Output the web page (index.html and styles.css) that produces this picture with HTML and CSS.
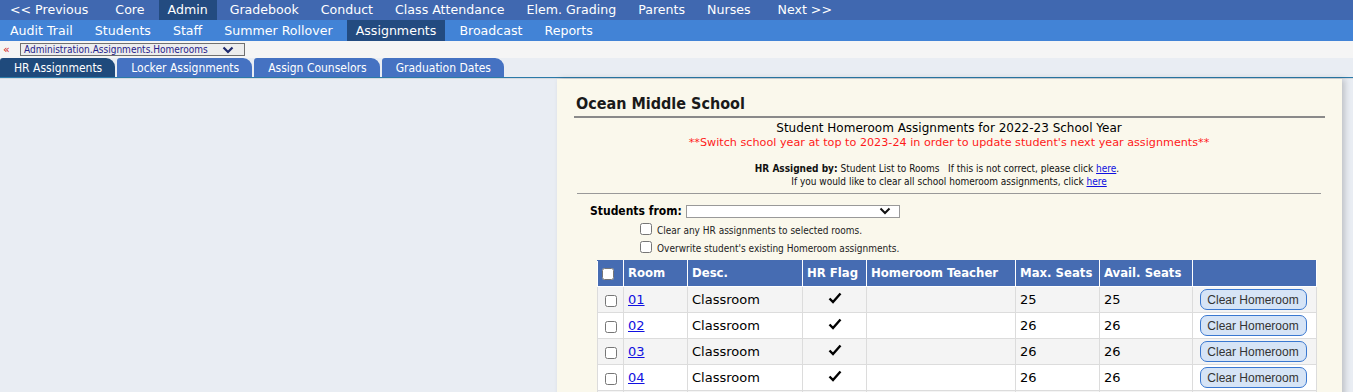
FILE: index.html
```html
<!DOCTYPE html>
<html lang="en">
<head>
  <meta charset="UTF-8" />
  <title>Homeroom Assignments</title>
  <link rel="stylesheet" href="styles.css">
</head>
<body>

  <!-- Main menu -->
  <div class="menu top">
    <a class="prev">&lt;&lt; Previous</a>
    <a>Core</a>
    <a class="on">Admin</a>
    <a>Gradebook</a>
    <a>Conduct</a>
    <a>Class Attendance</a>
    <a>Elem. Grading</a>
    <a>Parents</a>
    <a>Nurses</a>
    <a class="next">Next &gt;&gt;</a>
  </div>
  <div class="menu sub">
    <a>Audit Trail</a>
    <a>Students</a>
    <a>Staff</a>
    <a>Summer Rollover</a>
    <a class="on">Assignments</a>
    <a>Broadcast</a>
    <a>Reports</a>
  </div>

  <!-- Breadcrumb -->
  <div class="crumb">
    <span class="back">&laquo;</span>
    <div class="crumb-select">
      <span>Administration.Assignments.Homerooms</span>
      <svg width="12" height="8" viewBox="0 0 12 8"><path d="M1.5 1.5 L6 6 L10.5 1.5" fill="none" stroke="#1e2a6e" stroke-width="2.2"/></svg>
    </div>
  </div>

  <!-- Tabs -->
  <div class="tabs">
    <div class="tab on">HR Assignments</div>
    <div class="tab">Locker Assignments</div>
    <div class="tab">Assign Counselors</div>
    <div class="tab">Graduation Dates</div>
  </div>

  <div class="content">
    <div class="panel">
      <h2 class="school">Ocean Middle School</h2>

      <div class="intro">
        <div class="title">Student Homeroom Assignments for 2022-23 School Year</div>
        <div class="warn">**Switch school year at top to 2023-24 in order to update student's next year assignments**</div>
        <div class="note">
          <div class="note-first"><b>HR Assigned by:</b> Student List to Rooms &nbsp; If this is not correct, please click <a href="#">here</a>.</div>
          <div>If you would like to clear all school homeroom assignments, click <a href="#">here</a></div>
        </div>
      </div>

      <div class="options">
        <div class="from">
          <label>Students from:</label>
          <div class="from-select">
            <svg width="12" height="8" viewBox="0 0 12 8"><path d="M1.5 1.5 L6 6 L10.5 1.5" fill="none" stroke="#111" stroke-width="2"/></svg>
          </div>
        </div>
        <label class="opt"><input type="checkbox"> Clear any HR assignments to selected rooms.</label>
        <label class="opt"><input type="checkbox"> Overwrite student's existing Homeroom assignments.</label>
      </div>

      <table class="rooms">
        <thead>
          <tr>
            <th class="c-chk"><input type="checkbox"></th>
            <th class="c-room">Room</th>
            <th class="c-desc">Desc.</th>
            <th class="c-flag">HR Flag</th>
            <th class="c-teacher">Homeroom Teacher</th>
            <th class="c-max">Max. Seats</th>
            <th class="c-avail">Avail. Seats</th>
            <th class="c-btn"></th>
          </tr>
        </thead>
        <tbody>
          <tr>
            <td class="c-chk"><input type="checkbox"></td>
            <td><a href="#">01</a></td>
            <td>Classroom</td>
            <td class="c-flag"><svg class="tick" width="14" height="12" viewBox="0 0 14 12"><path d="M1.5 6.5 L5 10 L12.5 1.5" fill="none" stroke="#000" stroke-width="2.4"/></svg></td>
            <td></td>
            <td>25</td>
            <td>25</td>
            <td class="c-btn"><button>Clear Homeroom</button></td>
          </tr>
          <tr>
            <td class="c-chk"><input type="checkbox"></td>
            <td><a href="#">02</a></td>
            <td>Classroom</td>
            <td class="c-flag"><svg class="tick" width="14" height="12" viewBox="0 0 14 12"><path d="M1.5 6.5 L5 10 L12.5 1.5" fill="none" stroke="#000" stroke-width="2.4"/></svg></td>
            <td></td>
            <td>26</td>
            <td>26</td>
            <td class="c-btn"><button>Clear Homeroom</button></td>
          </tr>
          <tr>
            <td class="c-chk"><input type="checkbox"></td>
            <td><a href="#">03</a></td>
            <td>Classroom</td>
            <td class="c-flag"><svg class="tick" width="14" height="12" viewBox="0 0 14 12"><path d="M1.5 6.5 L5 10 L12.5 1.5" fill="none" stroke="#000" stroke-width="2.4"/></svg></td>
            <td></td>
            <td>26</td>
            <td>26</td>
            <td class="c-btn"><button>Clear Homeroom</button></td>
          </tr>
          <tr>
            <td class="c-chk"><input type="checkbox"></td>
            <td><a href="#">04</a></td>
            <td>Classroom</td>
            <td class="c-flag"><svg class="tick" width="14" height="12" viewBox="0 0 14 12"><path d="M1.5 6.5 L5 10 L12.5 1.5" fill="none" stroke="#000" stroke-width="2.4"/></svg></td>
            <td></td>
            <td>26</td>
            <td>26</td>
            <td class="c-btn"><button>Clear Homeroom</button></td>
          </tr>
          <tr>
            <td class="c-chk"><input type="checkbox"></td>
            <td><a href="#">05</a></td>
            <td>Classroom</td>
            <td class="c-flag"><svg class="tick" width="14" height="12" viewBox="0 0 14 12"><path d="M1.5 6.5 L5 10 L12.5 1.5" fill="none" stroke="#000" stroke-width="2.4"/></svg></td>
            <td></td>
            <td>26</td>
            <td>26</td>
            <td class="c-btn"><button>Clear Homeroom</button></td>
          </tr>
        </tbody>
      </table>
    </div>
  </div>

</body>
</html>
```

FILE: styles.css
```css
body {
  margin: 0;
  font-family: "DejaVu Sans", Verdana, sans-serif;
  background: #e9edf3;
  color: #000;
  overflow: hidden;
}

/* menus */
.menu {
  display: flex;
  font-family: "DejaVu Sans", sans-serif;
  font-size: 12.6px;
  color: #fff;
}

.menu a {
  display: block;
  padding: 0 11px;
  line-height: 20px;
  white-space: nowrap;
}

.menu a:first-child {
  padding-left: 10px;
}

.top {
  background: #4068b0;
  height: 20px;
}

.top .prev {
  margin-right: 5px;
}

.top .on {
  background: #234b80;
  padding: 0 9px;
  margin: 0 2px 0 3px;
}

.top .next {
  margin-left: 5px;
}

.sub {
  background: #4283d6;
  height: 21px;
}

.sub a {
  line-height: 21px;
}

.sub .on {
  background: #234b80;
  padding: 0 9px;
  margin: 0 3px;
}

/* breadcrumb */
.crumb {
  display: flex;
  align-items: center;
  height: 17px;
  background: #f5f5f5;
}

.back {
  color: #d01010;
  font-size: 11px;
  width: 20px;
  padding-left: 3px;
  box-sizing: border-box;
  line-height: 12px;
}

.crumb-select {
  display: flex;
  align-items: center;
  justify-content: space-between;
  width: 225px;
  height: 13px;
  box-sizing: border-box;
  border: 1px solid #707070;
  background: #ededed;
  padding: 0 10px 0 3px;
  font-family: "DejaVu Sans Condensed", sans-serif;
  font-size: 10px;
  color: #27238a;
}

/* tabs */
.tabs {
  display: flex;
  gap: 2px;
  height: 19px;
  border-bottom: 1px solid #2b7aa8;
  background: #e9edf3;
}

.tab {
  background: #4572c2;
  color: #fff;
  font-family: "DejaVu Sans Condensed", sans-serif;
  font-size: 12px;
  line-height: 20px;
  padding: 0 13px 0 14px;
  border-radius: 3px 9px 0 0;
  white-space: nowrap;
}

.tab.on {
  background: #1f4a7c;
}

/* content */
.content {
  border-top: 1px solid #d5d9df;
  height: 400px;
  padding-left: 557px;
}

.panel {
  width: 785px;
  height: 100%;
  background: #faf8ec;
  box-shadow: 3px 0 6px rgba(0, 0, 0, 0.18);
  box-sizing: border-box;
  padding: 15px 17px 0 17px;
}

.school {
  font-family: "DejaVu Sans Condensed", sans-serif;
  font-weight: bold;
  font-size: 16px;
  color: #1a1a1a;
  margin: 0;
  padding: 0 0 2px 2px;
  border-bottom: 2px solid #8a8a8a;
  line-height: 20px;
}

.intro {
  text-align: center;
  margin: 0 4px 0 3px;
  padding-bottom: 5px;
  border-bottom: 1px solid #999;
}

.title {
  font-size: 12px;
  line-height: 16px;
  margin-top: 2px;
}

.warn {
  font-size: 11.2px;
  color: #ff1a1a;
  line-height: 14px;
}

.note {
  font-family: "DejaVu Sans Condensed", sans-serif;
  font-size: 10px;
  line-height: 13px;
  margin-top: 12px;
  color: #111;
}

.note-first {
  padding-right: 24px;
}

.note a {
  color: #1010e0;
}

.options {
  padding: 10px 0 0 16px;
}

.from {
  display: flex;
  align-items: center;
  gap: 4px;
  margin-bottom: 3px;
}

.from label {
  font-weight: bold;
  font-size: 12px;
  font-family: "DejaVu Sans Condensed", sans-serif;
}

.from-select {
  width: 214px;
  height: 13px;
  box-sizing: border-box;
  border: 1px solid #999;
  background: #fff;
  display: flex;
  align-items: center;
  justify-content: flex-end;
  padding-right: 8px;
}

.opt {
  display: flex;
  align-items: center;
  font-family: "DejaVu Sans Condensed", sans-serif;
  font-size: 10px;
  color: #222;
  height: 18px;
  padding-left: 50px;
}

.opt input {
  margin: 0 5px 2px 0;
  width: 12px;
  height: 12px;
}

/* table */
.rooms {
  border-collapse: collapse;
  margin: 3px 0 0 23px;
  width: 720px;
  font-size: 13px;
}

.rooms th {
  background: #466cb2;
  color: #fff;
  font-family: "DejaVu Sans Condensed", sans-serif;
  font-weight: bold;
  font-size: 13px;
  text-align: left;
  height: 23px;
  padding: 0 4px 2px 4px;
  border: 1px solid #fff;
  border-top: 1px solid #466cb2;
  white-space: nowrap;
}

.rooms td {
  height: 25px;
  padding: 0 4px;
  border: 1px solid #dcdcdc;
}

.rooms tbody tr:nth-child(odd) {
  background: #f4f4f4;
}

.rooms tbody tr:nth-child(even) {
  background: #fff;
}

.rooms input {
  margin: 0;
  width: 12px;
  height: 12px;
  vertical-align: middle;
}

.rooms a {
  color: #1010e0;
}

.c-chk { width: 17px; text-align: center; }
.c-room { width: 55px; }
.c-desc { width: 106px; }
.c-flag { width: 55px; text-align: center; }
.rooms th.c-flag { text-align: left; }
.c-teacher { width: 140px; }
.c-max { width: 75px; }
.c-avail { width: 84px; }
.c-btn { width: 115px; text-align: center; }

.tick {
  display: block;
  margin: -3px auto 0 auto;
}

button {
  font-family: "Liberation Sans", Arial, sans-serif;
  font-size: 12px;
  color: #333;
  background: #d6e4f6;
  border: 1px solid #3a78d0;
  border-radius: 7px;
  width: 107px;
  height: 21px;
  padding: 0;
  margin-left: -3px;
}
```
